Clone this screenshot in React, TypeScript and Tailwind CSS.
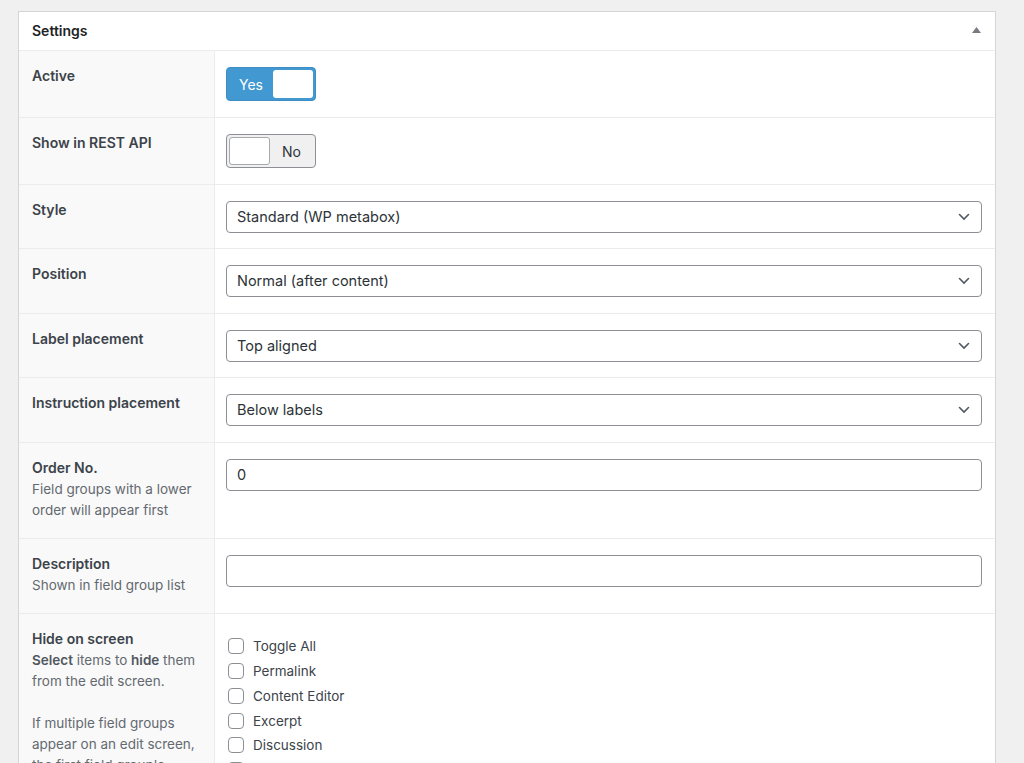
import React from "react";

const font = { fontFamily: "Inter, 'Noto Sans', sans-serif" };

function Chevron() {
  return (
    <svg width="12" height="8" viewBox="0 0 12 8" className="shrink-0">
      <path d="M1.5 1.5 L6 6 L10.5 1.5" fill="none" stroke="#50575e" strokeWidth="1.6" strokeLinecap="round" />
    </svg>
  );
}

function Select({ value }: { value: string }) {
  return (
    <div className="flex items-center justify-between h-[32px] rounded-[4px] border border-[#8c8f94] bg-white pl-[10px] pr-[11px] text-[14.5px] text-[#2c3338]">
      <span>{value}</span>
      <Chevron />
    </div>
  );
}

function Input({ value }: { value?: string }) {
  return (
    <div className="flex items-center h-[32px] rounded-[4px] border border-[#8c8f94] bg-white px-[10px] text-[14.5px] text-[#2c3338]">
      {value}
    </div>
  );
}

function Row({
  label,
  desc,
  children,
  pad = "pt-[16px] pb-[16px]",
}: {
  label: string;
  desc?: React.ReactNode;
  children: React.ReactNode;
  pad?: string;
}) {
  return (
    <div className="flex border-t border-[#ececec]">
      <div className="w-[196px] shrink-0 bg-[#f9f9f9] border-r border-[#ececec] pl-[13px] pr-[12px] pt-[15px] pb-[17px]">
        <div className="text-[14px] font-semibold leading-[20px] text-[#3c434a]">{label}</div>
        {desc && <div className="text-[13.5px] leading-[21px] text-[#646970] mt-[1px]">{desc}</div>}
      </div>
      <div className={`flex-1 bg-white pl-[11px] pr-[13px] ${pad}`}>{children}</div>
    </div>
  );
}

const checks = ["Toggle All", "Permalink", "Content Editor", "Excerpt", "Discussion", "Comments", "Revisions"];

export default function App() {
  return (
    <div className="bg-[#f0f0f0] pt-[11px] pl-[18px] pr-[28px] overflow-hidden h-[763px]" style={font}>
      <div className="border border-[#d5d5d5] bg-white">
        <div className="flex items-center justify-between h-[39px] pl-[13px] pr-[14px] pb-[2px] border-b border-[#d5d5d5]">
          <span className="text-[14px] font-semibold text-[#1d2327]">Settings</span>
          <svg width="9" height="6" viewBox="0 0 9 6">
            <path d="M4.5 0 L9 6 L0 6 Z" fill="#787c82" />
          </svg>
        </div>
        <div className="-mt-px">
          <Row label="Active">
            <div className="flex w-[90px] h-[34px] rounded-[4px] bg-[#4298d1] border border-[#3f8dc5] items-center p-[2px]">
              <span className="flex-1 text-center text-[14px] text-white">Yes</span>
              <span className="w-[40px] h-full rounded-[3px] bg-white" />
            </div>
          </Row>
          <Row label="Show in REST API">
            <div className="flex w-[90px] h-[34px] rounded-[4px] bg-[#f0f0f1] border border-[#8c8f94] items-center p-[2px]">
              <span className="w-[41px] h-full rounded-[3px] bg-white border border-[#a7aaad]" />
              <span className="flex-1 text-center text-[14px] text-[#2c3338]">No</span>
            </div>
          </Row>
          <Row label="Style" pad="pt-[16px] pb-[15px]">
            <Select value="Standard (WP metabox)" />
          </Row>
          <Row label="Position">
            <Select value="Normal (after content)" />
          </Row>
          <Row label="Label placement" pad="pt-[16px] pb-[15px]">
            <Select value="Top aligned" />
          </Row>
          <Row label="Instruction placement">
            <Select value="Below labels" />
          </Row>
          <Row label="Order No." desc="Field groups with a lower order will appear first">
            <Input value="0" />
          </Row>
          <Row label="Description" desc="Shown in field group list">
            <Input />
          </Row>
          <Row
            label="Hide on screen"
            desc={
              <>
                <span>
                  <b className="font-semibold text-[#50575e]">Select</b> items to{" "}
                  <b className="font-semibold text-[#50575e]">hide</b> them from the edit screen.
                </span>
                <br />
                <br />
                <span>
                  If multiple field groups appear on an edit screen, the first field group's options will be used (the
                  one with the lowest order number)
                </span>
              </>
            }
          >
            <div className="pt-[4px] pl-[2px] flex flex-col">
              {checks.map((c) => (
                <label key={c} className="flex items-center h-[24.75px] gap-[9px] text-[13.5px] text-[#3c434a]">
                  <span className="w-[16px] h-[16px] rounded-[4px] border border-[#8c8f94] bg-white" />
                  {c}
                </label>
              ))}
            </div>
          </Row>
        </div>
      </div>
    </div>
  );
}
